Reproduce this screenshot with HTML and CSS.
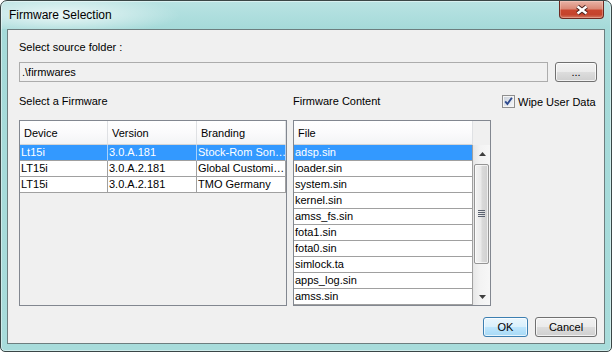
FILE: index.html
```html
<!DOCTYPE html>
<html lang="en">
<head>
<meta charset="UTF-8">
<title>Firmware Selection</title>
<link rel="stylesheet" href="styles.css">
</head>
<body>

<div class="window">
  <div class="titlebar">
    <span class="title">Firmware Selection</span>
    <button class="close" title="Close">
      <svg width="14" height="10" viewBox="0 0 14 10">
        <path d="M2.5 1.5 L11.5 8.5 M11.5 1.5 L2.5 8.5" stroke="#4b2420" stroke-width="4.4" fill="none"/>
        <path d="M2.5 1.5 L11.5 8.5 M11.5 1.5 L2.5 8.5" stroke="#fff" stroke-width="2.4" fill="none"/>
      </svg>
    </button>
  </div>

  <div class="client">
    <div class="label">Select source folder :</div>
    <div class="folder-row">
      <div class="textbox">.\firmwares</div>
      <button class="btn browse">...</button>
    </div>

    <div class="panes">
      <div class="label">Select a Firmware</div>
      <div class="label">Firmware Content</div>
      <label class="wipe">
        <svg width="13" height="13" viewBox="0 0 13 13">
          <defs>
            <linearGradient id="cbFill" x1="0" y1="0" x2="1" y2="1">
              <stop offset="0" stop-color="#cdd3dc"/>
              <stop offset="1" stop-color="#f4f6f9"/>
            </linearGradient>
          </defs>
          <rect x="0.5" y="0.5" width="12" height="12" fill="#f5f5f5" stroke="#8f8f8f"/>
          <rect x="2" y="2" width="9" height="9" fill="url(#cbFill)"/>
          <path d="M3.2 6.4 L5.4 9 L9.9 2.8" stroke="#2f4b8f" stroke-width="1.9" fill="none"/>
        </svg>
        <span>Wipe User Data</span>
      </label>

      <div class="grid">
        <div class="fw-cols head">
          <div class="hcell">Device</div>
          <div class="hcell">Version</div>
          <div class="hcell">Branding</div>
        </div>
        <div class="fw-cols row selected">
          <div class="cell">Lt15i</div>
          <div class="cell">3.0.A.181</div>
          <div class="cell">Stock-Rom Son…</div>
        </div>
        <div class="fw-cols row">
          <div class="cell">LT15i</div>
          <div class="cell">3.0.A.2.181</div>
          <div class="cell">Global Customi…</div>
        </div>
        <div class="fw-cols row">
          <div class="cell">LT15i</div>
          <div class="cell">3.0.A.2.181</div>
          <div class="cell">TMO Germany</div>
        </div>
      </div>

      <div class="grid">
        <div class="head file-head">
          <div class="hcell file-col">File</div>
        </div>
        <div class="file-body">
          <div class="file-list">
            <div class="cell file-col selected">adsp.sin</div>
            <div class="cell file-col">loader.sin</div>
            <div class="cell file-col">system.sin</div>
            <div class="cell file-col">kernel.sin</div>
            <div class="cell file-col">amss_fs.sin</div>
            <div class="cell file-col">fota1.sin</div>
            <div class="cell file-col">fota0.sin</div>
            <div class="cell file-col">simlock.ta</div>
            <div class="cell file-col">apps_log.sin</div>
            <div class="cell file-col">amss.sin</div>
          </div>
          <div class="vscroll">
            <div class="arrow">
              <svg width="7" height="4" viewBox="0 0 7 4"><path d="M0 4 L3.5 0 L7 4 Z" fill="#3f3f3f"/></svg>
            </div>
            <div class="track">
              <div class="thumb">
                <svg width="7" height="8" viewBox="0 0 7 8">
                  <path d="M0 0.5 H7 M0 2.5 H7 M0 4.5 H7 M0 6.5 H7" stroke="#5b6270" stroke-width="1"/>
                </svg>
              </div>
            </div>
            <div class="arrow">
              <svg width="7" height="4" viewBox="0 0 7 4"><path d="M0 0 L7 0 L3.5 4 Z" fill="#3f3f3f"/></svg>
            </div>
          </div>
        </div>
      </div>
    </div>

    <div class="actions">
      <button class="btn default ok">OK</button>
      <button class="btn cancel">Cancel</button>
    </div>
  </div>
</div>

</body>
</html>
```

FILE: styles.css
```css
body {
  margin: 0;
  font-family: 'Liberation Sans', Arial, sans-serif;
  font-size: 11px;
  color: #000;
  background: #fff;
}
.window {
  width: 612px;
  height: 352px;
  box-sizing: border-box;
  border: 1px solid #3a4646;
  border-radius: 7px 7px 5px 5px;
  background: linear-gradient(to bottom, #b9e3e3, #a5dad9 28px, #a8dcdb);
  box-shadow: inset 0 0 0 1px rgba(255,255,255,0.45);
  display: flex;
  flex-direction: column;
  overflow: hidden;
}
.titlebar {
  height: 28px;
  flex: none;
  display: flex;
  align-items: flex-start;
  background: radial-gradient(ellipse 120px 20px at 60px 14px, rgba(255,255,255,0.75), rgba(255,255,255,0));
}
.title {
  font-size: 12px;
  line-height: 14px;
  margin: 7px 0 0 8px;
}
.close {
  margin-left: auto;
  margin-right: 7px;
  width: 45px;
  height: 18px;
  padding: 0;
  border: 1px solid #6d2a22;
  border-top: none;
  border-radius: 0 0 4px 4px;
  background: linear-gradient(to bottom, #e8b3a6, #da8a77 45%, #c9462f 55%, #c4432c 80%, #d37a63);
  box-shadow: inset 0 0 0 1px rgba(255,220,210,0.35);
  display: flex;
  align-items: center;
  justify-content: center;
}
.close svg {
  overflow: visible;
}
.client {
  flex: 1;
  margin: 0 6px 7px 6px;
  background: #f0f0f0;
  border: 1px solid #6d7e7f;
  padding: 10px 7px 6px 11px;
  display: flex;
  flex-direction: column;
}
.label {
  line-height: 15px;
  white-space: nowrap;
}
.folder-row {
  display: flex;
  gap: 7px;
  height: 20px;
  margin-top: 7px;
}
.textbox {
  flex: 1;
  border: 1px solid #acacac;
  background: #f0f0f0;
  padding-left: 2px;
  line-height: 18px;
}
.btn {
  font: inherit;
  height: 20px;
  padding: 0;
  border: 1px solid #707070;
  border-radius: 3px;
  background: linear-gradient(to bottom, #f2f2f2, #ebebeb 50%, #dddddd 50%, #cfcfcf);
  box-shadow: inset 0 0 0 1px rgba(255,255,255,0.7);
  color: #000;
}
.browse {
  width: 42px;
}
.panes {
  display: grid;
  grid-template-columns: 268px 198px 1fr;
  grid-template-rows: 15px 186px;
  column-gap: 6px;
  row-gap: 11px;
  margin-top: 12px;
}
.wipe {
  display: flex;
  align-items: center;
  gap: 3px;
  margin-left: 5px;
  white-space: nowrap;
}
.grid {
  border: 1px solid #828790;
  background: #f0f0f0;
  display: flex;
  flex-direction: column;
  overflow: hidden;
}
.fw-cols {
  display: grid;
  grid-template-columns: 88px 89px 89px;
}
.head {
  height: 24px;
}
.hcell {
  box-sizing: border-box;
  height: 24px;
  padding: 2px 0 0 4px;
  line-height: 21px;
  background: linear-gradient(to bottom, #ffffff, #fbfbfc 50%, #f3f4f6);
  border-right: 1px solid #dfe1e4;
  border-bottom: 1px solid #d5d5d5;
}
.cell {
  box-sizing: border-box;
  height: 16px;
  line-height: 15px;
  padding-left: 1px;
  background: #fff;
  border-right: 1px solid #a0a0a0;
  border-bottom: 1px solid #a0a0a0;
  white-space: nowrap;
  overflow: hidden;
}
.selected,
.selected .cell {
  background: #3399ff;
  color: #fff;
}
.row.selected .cell {
  border-right-color: #a9d1fb;
}
.file-head {
  display: flex;
}
.file-col {
  width: 179px;
}
.file-body {
  flex: 1;
  display: flex;
}
.file-list {
  display: flex;
  flex-direction: column;
}
.vscroll {
  width: 17px;
  box-sizing: border-box;
  border-left: 1px solid #e6e6e6;
  background: linear-gradient(to right, #e9e9e9, #f3f3f3 40%, #f7f7f7);
  display: flex;
  flex-direction: column;
}
.arrow {
  height: 17px;
  display: flex;
  align-items: center;
  justify-content: center;
}
.track {
  flex: 1;
}
.thumb {
  margin: 2px 1px 0 0;
  height: 100px;
  box-sizing: border-box;
  border: 1px solid #959595;
  border-radius: 2px;
  background: linear-gradient(to right, #f3f3f3, #eaeaea 45%, #dadada 55%, #d0d0d0);
  box-shadow: inset 0 0 0 1px rgba(255,255,255,0.65);
  display: flex;
  align-items: center;
  justify-content: center;
}
.actions {
  display: flex;
  justify-content: flex-end;
  gap: 7px;
  margin-top: 11px;
}
.ok {
  width: 45px;
}
.cancel {
  width: 62px;
}
.default {
  border-color: #3c7fb1;
  background: linear-gradient(to bottom, #eaf6fd, #d9f0fc 50%, #bee6fd 50%, #a7d9f5);
}
```
